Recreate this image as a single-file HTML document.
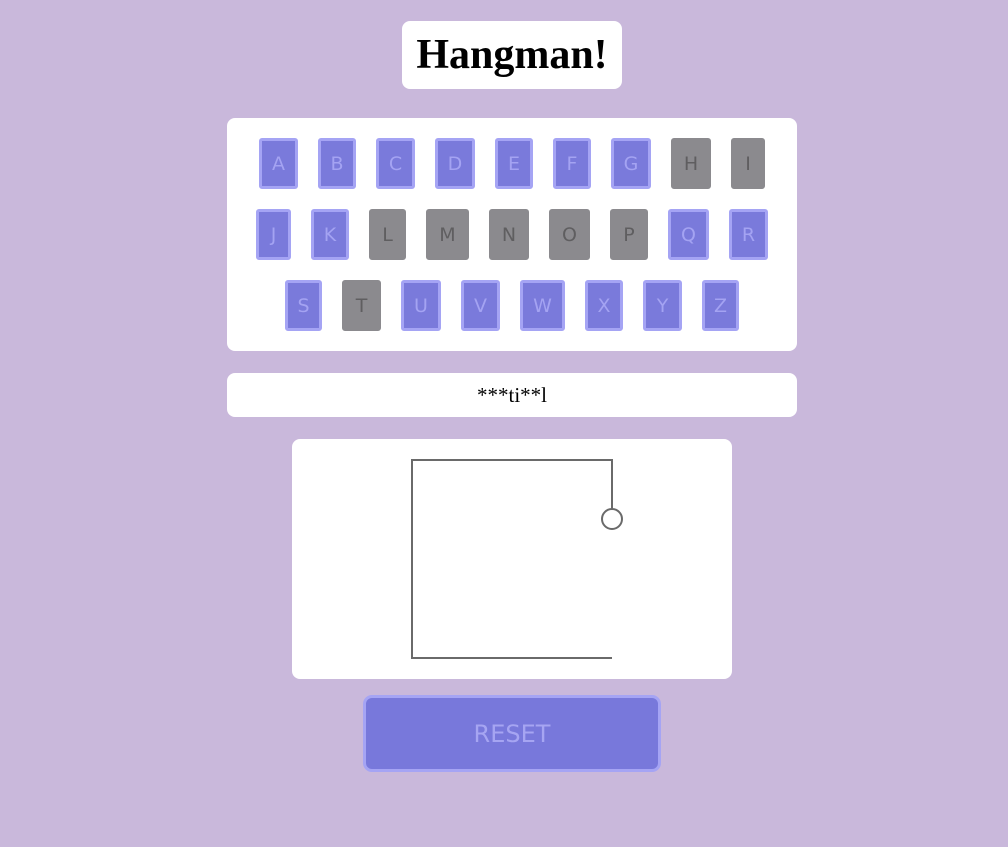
<!DOCTYPE html>
<html><head><meta charset="utf-8"><style>
html,body{margin:0;padding:0;background:#c9b8db;width:1008px;height:847px;overflow:hidden;position:relative}
.p{position:absolute;background:#fff;border-radius:8px}
.k{position:absolute;box-sizing:border-box;height:51px;border:3px solid #a5a4f4;background:#7a7adb;border-radius:3px;color:#a4a3f2;font-family:"DejaVu Sans","Liberation Sans",sans-serif;font-size:19px;display:flex;align-items:center;justify-content:center}
.k.g{background:#8b8a8e;border-color:#8b8a8e;color:#5f5e60}
</style></head><body>
<div class="p" style="left:402px;top:21px;width:220px;height:68px;display:flex;align-items:center;justify-content:center;font-family:'Liberation Serif',serif;font-weight:bold;font-size:42px;">Hangman!</div>
<div class="p" style="left:227px;top:118px;width:570px;height:233px"></div>
<div class="k" style="left:259px;top:138px;width:39px">A</div>
<div class="k" style="left:318px;top:138px;width:38px">B</div>
<div class="k" style="left:376px;top:138px;width:39px">C</div>
<div class="k" style="left:435px;top:138px;width:40px">D</div>
<div class="k" style="left:495px;top:138px;width:38px">E</div>
<div class="k" style="left:553px;top:138px;width:38px">F</div>
<div class="k" style="left:611px;top:138px;width:40px">G</div>
<div class="k g" style="left:671px;top:138px;width:40px">H</div>
<div class="k g" style="left:731px;top:138px;width:34px">I</div>
<div class="k" style="left:256px;top:209px;width:35px">J</div>
<div class="k" style="left:311px;top:209px;width:38px">K</div>
<div class="k g" style="left:369px;top:209px;width:37px">L</div>
<div class="k g" style="left:426px;top:209px;width:43px">M</div>
<div class="k g" style="left:489px;top:209px;width:40px">N</div>
<div class="k g" style="left:549px;top:209px;width:41px">O</div>
<div class="k g" style="left:610px;top:209px;width:38px">P</div>
<div class="k" style="left:668px;top:209px;width:41px">Q</div>
<div class="k" style="left:729px;top:209px;width:39px">R</div>
<div class="k" style="left:285px;top:280px;width:37px">S</div>
<div class="k g" style="left:342px;top:280px;width:39px">T</div>
<div class="k" style="left:401px;top:280px;width:40px">U</div>
<div class="k" style="left:461px;top:280px;width:39px">V</div>
<div class="k" style="left:520px;top:280px;width:45px">W</div>
<div class="k" style="left:585px;top:280px;width:38px">X</div>
<div class="k" style="left:643px;top:280px;width:39px">Y</div>
<div class="k" style="left:702px;top:280px;width:37px">Z</div>
<div class="p" style="left:227px;top:373px;width:570px;height:44px;display:flex;align-items:center;justify-content:center;font-family:'Liberation Serif',serif;font-size:21px">***ti**l</div>
<div class="p" style="left:292px;top:439px;width:440px;height:240px">
<svg width="440" height="240" style="position:absolute;left:0;top:0">
<g stroke="#6a6a6a" stroke-width="2" fill="none">
<path d="M120 20 V220 M119 21 H320 M320 20 V70 M120 219 H320"/>
<circle cx="320" cy="80" r="10" fill="#fff"/>
</g></svg></div>
<div style="position:absolute;left:363px;top:695px;width:298px;height:77px;box-sizing:border-box;border:3px solid #a5a4f4;background:#7878db;border-radius:9px;display:flex;align-items:center;justify-content:center;color:#a6a5f2;font-family:'DejaVu Sans','Liberation Sans',sans-serif;font-size:24px">RESET</div>
</body></html>
